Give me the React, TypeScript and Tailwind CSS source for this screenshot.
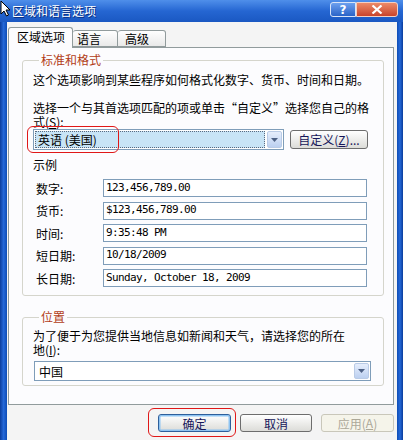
const cjk = "font-['Noto_Sans_CJK_SC','Noto_Sans',sans-serif]";
const mono = "font-['DejaVu_Sans_Mono','Liberation_Mono',monospace] text-[11px] tracking-[-0.62px]";

function ArrowButton({ className = "" }: { className?: string }) {
  return (
    <div
      className={
        "flex items-center justify-center rounded-[2px] border border-[#b9cbe6] bg-gradient-to-b from-[#e6eefc] to-[#bcd0f0] " +
        className
      }
    >
      <svg width="7" height="4" viewBox="0 0 7 4">
        <path d="M0 0h7L3.5 4z" fill="#4d6185" />
      </svg>
    </div>
  );
}

function Key({ k }: { k: string }) {
  return <span className="inline-block h-[14px] leading-[14px] underline">{k}</span>;
}

function Sample({ label, value }: { label: string; value: string }) {
  return (
    <div className="flex items-center h-[18px]">
      <span className="ml-[3px] w-[67px] leading-[13px]">{label}</span>
      <div className={"w-[264px] h-[18px] border border-[#7f9db9] bg-white pl-[2px] flex items-center text-black " + mono}>
        {value}
      </div>
    </div>
  );
}

function XpButton({ children, variant = "normal" }: { children: React.ReactNode; variant?: "normal" | "focus" | "disabled" }) {
  const base = "h-[18px] flex items-center justify-center rounded-[3px] border text-[12px] leading-[13px] ";
  if (variant === "disabled")
    return <div className={base + "w-[73px] border-[#c9c7ba] bg-[#f5f4ea] text-[#aca899]"}>{children}</div>;
  if (variant === "focus")
    return (
      <div className={base + "w-[73px] border-[#2e5f9b] bg-gradient-to-b from-white to-[#dcdcd8] text-[#16165a] shadow-[inset_0_0_0_1.5px_#8ec4f2]"}>
        {children}
      </div>
    );
  return (
    <div className={base + "w-[72px] border-[#6d6d6d] bg-gradient-to-b from-white to-[#dcdcd8] text-[#16165a]"}>
      {children}
    </div>
  );
}

export default function App() {
  return (
    <div className={"relative w-[403px] h-[440px] overflow-hidden text-[12px] text-black bg-[#f4f4f4] " + cjk}>
      {/* Title bar */}
      <div className="h-[22px] flex items-center bg-gradient-to-b from-[#4f8fea] via-[#2566d2] to-[#1a58c2] pl-[12px] pr-[5px]">
        <span className="flex-1 text-white leading-[14px] [text-shadow:1px_1px_0_#0a2f80]">区域和语言选项</span>
        <div className="flex mb-[3px]">
          <div className="w-[26px] h-[15px] rounded-l-[3px] border border-[#d8e4f8] bg-gradient-to-b from-[#6da0ee] to-[#2a63c8] flex items-center justify-center text-white font-bold text-[12px] leading-[12px] font-['DejaVu_Sans',sans-serif]">
            ?
          </div>
          <div className="w-[42px] h-[15px] rounded-r-[3px] border border-[#f3d0c4] bg-gradient-to-b from-[#ec8a68] to-[#c9432b] flex items-center justify-center">
            <svg width="12" height="9" viewBox="0 0 12 9">
              <path d="M1.5 0.5L10.5 8.5M10.5 0.5L1.5 8.5" stroke="white" strokeWidth="2.2" />
            </svg>
          </div>
        </div>
      </div>

      <div className="flex h-[418px]">
        <div className="w-[7px] bg-gradient-to-r from-[#0a3c9c] via-[#2468d8] to-[#0c4cb6]" />
        <div className="flex-1 flex flex-col pt-[5px] pl-[1px] pr-[3px]">
          {/* Tabs */}
          <div className="flex items-end h-[20px] relative z-10">
            <div className="w-[65px] h-[21px] mb-[-1px] rounded-t-[3px] border border-b-0 border-[#919b9c] bg-[#fcfcfe] pl-[8px] pt-[2px] leading-[14px]">
              区域选项
            </div>
            <div className="w-[45px] h-[17px] rounded-t-[3px] border border-[#919b9c] border-l-0 bg-gradient-to-b from-white to-[#e9e9e9] pl-[4px] pt-[1px] leading-[14px]">
              语言
            </div>
            <div className="w-[48px] h-[17px] rounded-t-[3px] border border-[#919b9c] border-l-0 bg-gradient-to-b from-white to-[#e9e9e9] pl-[7px] pt-[1px] leading-[14px]">
              高级
            </div>
          </div>

          {/* Panel */}
          <div className="h-[358px] border border-[#919b9c] bg-[#fcfcfe] flex flex-col">
            <fieldset className="mt-[5px] ml-[13px] mr-[9px] border border-[#d5d5cc] rounded-[3px] pl-[10px] pb-[8px]">
              <legend className="ml-[6px] px-[2px] leading-[14px] text-[#b23c17]">标准和格式</legend>
              <div className="mt-[6px] h-[14px] leading-[14px] whitespace-nowrap">这个选项影响到某些程序如何格式化数字、货币、时间和日期。</div>
              <div className="mt-[14px] h-[14px] leading-[14px] whitespace-nowrap">
                选择一个与其首选项匹配的项或单击“自定义”选择您自己的格
              </div>
              <div className="h-[14px] leading-[14px] whitespace-nowrap">
                式(<Key k="S" />):
              </div>
              <div className="flex items-center">
                <div className="w-[251px] h-[21px] border border-[#7f9db9] bg-white flex items-center p-[1px]">
                  <div className="flex-1 h-full bg-[#c8e4f6] border border-dotted border-[#5a6a80] pl-[2px] flex items-center leading-[13px]">
                    英语 (美国)
                  </div>
                  <ArrowButton className="w-[15px] h-full ml-[2px]" />
                </div>
                <div className="ml-[6px] w-[78px] h-[19px] rounded-[3px] border border-[#6d6d6d] bg-gradient-to-b from-white to-[#dcdcd8] flex items-center justify-center text-[#16165a] leading-[13px]">
                  自定义(<Key k="Z" />)...
                </div>
              </div>
              <div className="mt-[8px] leading-[14px]">示例</div>
              <div className="mt-[7px] flex flex-col gap-[4.5px]">
                <Sample label="数字:" value="123,456,789.00" />
                <Sample label="货币:" value="$123,456,789.00" />
                <Sample label="时间:" value="9:35:48 PM" />
                <Sample label="短日期:" value="10/18/2009" />
                <Sample label="长日期:" value="Sunday, October 18, 2009" />
              </div>
            </fieldset>

            <fieldset className="mt-[14px] ml-[13px] mr-[9px] border border-[#d5d5cc] rounded-[3px] pl-[10px] pb-[4px]">
              <legend className="ml-[6px] px-[2px] leading-[14px] text-[#b23c17]">位置</legend>
              <div className="mt-[5px] h-[14px] leading-[14px] whitespace-nowrap">
                为了便于为您提供当地信息如新闻和天气，请选择您的所在
              </div>
              <div className="h-[14px] leading-[14px] whitespace-nowrap">
                地(<Key k="I" />):
              </div>
              <div className="mt-[4px] ml-[1px] w-[337px] h-[20px] border border-[#7f9db9] bg-white flex items-center p-[1px]">
                <span className="flex-1 pl-[3px] leading-[13px]">中国</span>
                <ArrowButton className="w-[15px] h-full" />
              </div>
            </fieldset>
          </div>

          {/* Buttons */}
          <div className="mt-[9px] flex justify-end gap-[9px]">
            <XpButton variant="focus">确定</XpButton>
            <XpButton>取消</XpButton>
            <XpButton variant="disabled">
              应用(<Key k="A" />)
            </XpButton>
          </div>
        </div>
        <div className="w-[6px] bg-gradient-to-r from-[#0c4cb6] via-[#2468d8] to-[#0a3c9c]" />
      </div>

      {/* Red annotation marks */}
      <div className="absolute left-[27px] top-[126px] w-[92px] h-[27px] rounded-[6px] border border-[#e01818]" />
      <div className="absolute left-[148px] top-[408px] w-[88px] h-[29px] rounded-[6px] border border-[#e01818]" />

      {/* Mouse cursor */}
      <svg className="absolute left-0 top-0" width="11" height="17" viewBox="0 0 11 17">
        <path d="M1 1v13l3-3 2.5 5 2-1-2.5-5H10z" fill="white" stroke="black" strokeWidth="1" />
      </svg>
    </div>
  );
}
